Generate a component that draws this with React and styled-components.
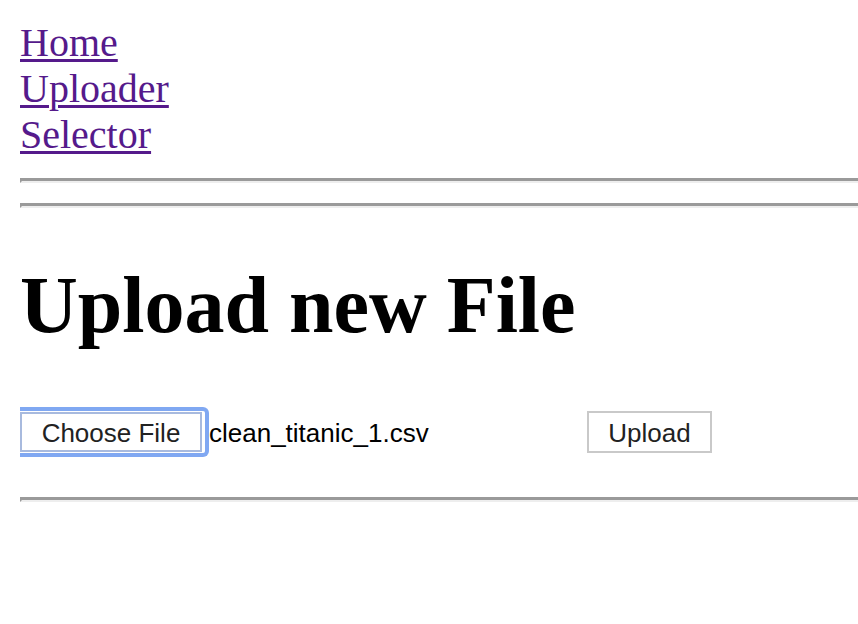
import React from "react";
import styled, { createGlobalStyle } from "styled-components";

const GlobalStyle = createGlobalStyle`
  html, body { background: #ffffff; }
  body {
    margin: 20px 0 0 20px;
    font-family: "Liberation Serif", "Times New Roman", serif;
    color: #000;
    overflow: hidden;
  }
`;

const Nav = styled.nav`
  display: flex;
  flex-direction: column;
  align-items: flex-start;
`;

const NavLink = styled.a`
  font-size: 40px;
  line-height: 46px;
  color: #551a8b;
  text-decoration: underline;
  text-decoration-thickness: 3px;
  text-underline-offset: 3px;
`;

const Rule = styled.hr`
  height: 0;
  margin: 20px 0;
  border-style: solid;
  border-width: 3px 0 2px 2px;
  border-color: #9a9a9a #eeeeee #eeeeee #9a9a9a;
`;

const Title = styled.h1`
  font-family: "Liberation Serif", "Times New Roman", serif;
  font-weight: bold;
  font-size: 80px;
  line-height: 92px;
  margin: 51px 0 56px 0;
`;

const Form = styled.form`
  display: flex;
  align-items: center;
  height: 50px;
  margin: 0 0 40px 0;
  font-family: "Liberation Sans", Arial, Helvetica, sans-serif;
  font-size: 26px;
`;

const FileField = styled.div`
  display: flex;
  align-items: center;
  width: 560px;
`;

const FocusRing = styled.span`
  display: inline-flex;
  padding: 1px 3px 1px 0;
  border: 4px solid #80a8f2;
  border-left: none;
  border-radius: 0 6px 6px 0;
`;

const ChooseButton = styled.span`
  box-sizing: border-box;
  display: inline-flex;
  align-items: center;
  justify-content: center;
  width: 182px;
  height: 40px;
  padding-top: 2px;
  background: #ffffff;
  border: 2px solid #a8bade;
  color: #222222;
  font-size: 26px;
`;

const FileName = styled.span`
  color: #000;
  padding-top: 2px;
  white-space: nowrap;
`;

const SubmitButton = styled.button`
  box-sizing: border-box;
  margin-left: 7px;
  width: 125px;
  height: 42px;
  padding: 2px 0 0 0;
  background: #ffffff;
  border: 2px solid #c9c9c9;
  border-radius: 0;
  color: #222222;
  font-family: "Liberation Sans", Arial, Helvetica, sans-serif;
  font-size: 26px;
  cursor: pointer;
`;

export default function App() {
  return (
    <>
      <GlobalStyle />
      <Nav>
        <NavLink href="#">Home</NavLink>
        <NavLink href="#">Uploader</NavLink>
        <NavLink href="#">Selector</NavLink>
      </Nav>
      <Rule />
      <Rule />
      <Title>Upload new File</Title>
      <Form onSubmit={(e) => e.preventDefault()}>
        <FileField>
          <FocusRing>
            <ChooseButton>Choose File</ChooseButton>
          </FocusRing>
          <FileName>clean_titanic_1.csv</FileName>
        </FileField>
        <SubmitButton type="submit">Upload</SubmitButton>
      </Form>
      <Rule />
    </>
  );
}
